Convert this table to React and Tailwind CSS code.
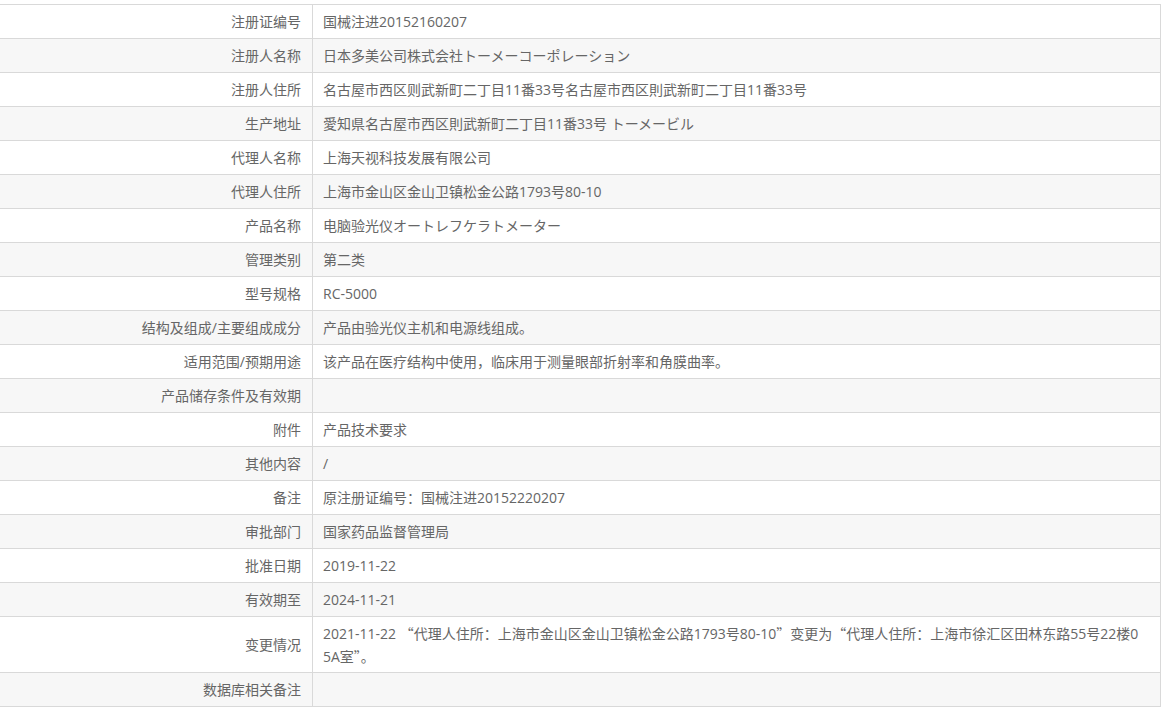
const rows = [
  ["注册证编号", "国械注进20152160207"],
  ["注册人名称", "日本多美公司株式会社トーメーコーポレーション"],
  ["注册人住所", "名古屋市西区则武新町二丁目11番33号名古屋市西区則武新町二丁目11番33号"],
  ["生产地址", "愛知県名古屋市西区則武新町二丁目11番33号 トーメービル"],
  ["代理人名称", "上海天视科技发展有限公司"],
  ["代理人住所", "上海市金山区金山卫镇松金公路1793号80-10"],
  ["产品名称", "电脑验光仪オートレフケラトメーター"],
  ["管理类别", "第二类"],
  ["型号规格", "RC-5000"],
  ["结构及组成/主要组成成分", "产品由验光仪主机和电源线组成。"],
  ["适用范围/预期用途", "该产品在医疗结构中使用，临床用于测量眼部折射率和角膜曲率。"],
  ["产品储存条件及有效期", ""],
  ["附件", "产品技术要求"],
  ["其他内容", "/"],
  ["备注", "原注册证编号：国械注进20152220207"],
  ["审批部门", "国家药品监督管理局"],
  ["批准日期", "2019-11-22"],
  ["有效期至", "2024-11-21"],
];

function Q({ children }) {
  return <span className="font-['Noto_Sans_CJK_SC',sans-serif]">{children}</span>;
}

export default function App() {
  return (
    <div className="bg-white w-[1167px] h-[717px] pt-[4px] text-[14px] text-[#666] font-['Open_Sans','Noto_Sans_CJK_SC',sans-serif]">
      <div className="w-[1161px] border-t border-r border-[#d9d9d9]">
        {rows.map(([label, value], i) => (
          <div
            key={label}
            className={`flex h-[34px] border-b border-[#d9d9d9] ${i % 2 === 1 ? "bg-[#f7f7f7]" : "bg-white"}`}
          >
            <div className="w-[313px] shrink-0 border-r border-[#d9d9d9] flex items-center justify-end pr-[11px]">
              {label}
            </div>
            <div className="flex-1 flex items-center pl-[10px]">{value}</div>
          </div>
        ))}
        <div className="flex h-[56px] border-b border-[#d9d9d9] bg-white">
          <div className="w-[313px] shrink-0 border-r border-[#d9d9d9] flex items-center justify-end pr-[11px]">
            变更情况
          </div>
          <div className="flex-1 flex items-center pl-[10px] leading-[22px] whitespace-nowrap">
            <div>
              2021-11-22 <Q>“</Q>代理人住所：上海市金山区金山卫镇松金公路1793号80-10<Q>”</Q>变更为<Q>“</Q>代理人住所：上海市徐汇区田林东路55号22楼0
              <br />
              5A室<Q>”</Q>。
            </div>
          </div>
        </div>
        <div className="flex h-[34px] border-b border-[#d9d9d9] bg-[#f7f7f7]">
          <div className="w-[313px] shrink-0 border-r border-[#d9d9d9] flex items-center justify-end pr-[11px]">
            数据库相关备注
          </div>
          <div className="flex-1" />
        </div>
      </div>
    </div>
  );
}
